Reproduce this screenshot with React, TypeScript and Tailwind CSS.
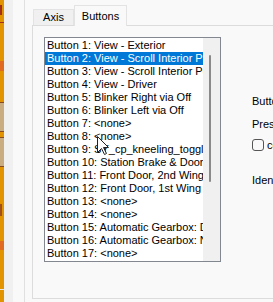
import React from 'react';

const items = [
  'Button 1: View - Exterior',
  'Button 2: View - Scroll Interior Position',
  'Button 3: View - Scroll Interior Position',
  'Button 4: View - Driver',
  'Button 5: Blinker Right via Off',
  'Button 6: Blinker Left via Off',
  'Button 7: <none>',
  'Button 8: <none>',
  'Button 9: SY_cp_kneeling_toggle',
  'Button 10: Station Brake & Door Release',
  'Button 11: Front Door, 2nd Wing',
  'Button 12: Front Door, 1st Wing',
  'Button 13: <none>',
  'Button 14: <none>',
  'Button 15: Automatic Gearbox: D',
  'Button 16: Automatic Gearbox: N',
  'Button 17: <none>',
];

const Cursor = () => (
  <svg className="absolute left-[97px] top-[136px]" width="13" height="20" viewBox="0 0 13 20">
    <path d="M0.5 0.5 L0.5 16.5 L4.5 12.5 L7.5 18.5 L9.5 17.5 L6.5 11.5 L11.5 11.5 Z" fill="#fff" stroke="#222" strokeWidth="1" />
  </svg>
);

const App: React.FC = () => {
  const selected = 1;

  return (
    <div className="relative flex w-[273px] h-[302px] overflow-hidden bg-[#f9f9f9] text-[11px] text-black" style={{ fontFamily: '"Liberation Sans", Arial, sans-serif' }}>
      {/* bit of the window behind */}
      <div className="flex flex-col w-[4px] bg-[#e29400]">
        <div className="h-[22px] relative">
          <div className="absolute left-0 top-[5px] w-[2px] h-[10px] bg-[#a0301a]" />
        </div>
        <div className="h-px bg-[#a0301a]" />
        <div className="h-[38px]" />
        <div className="h-[10px] bg-[#e06a20]" />
        <div className="h-[31px]" />
        <div className="h-px bg-[#8a4a20]" />
        <div className="h-[28px] bg-[#c9ad80]" />
        <div className="h-px bg-[#8a4a20]" />
        <div className="h-[5px]" />
        <div className="h-px bg-[#8a4a20]" />
        <div className="h-[28px] bg-[#c9ad80]" />
        <div className="h-px bg-[#8a4a20]" />
        <div className="h-[37px]" />
        <div className="h-[12px] w-[2px] bg-[#a0501a]" />
        <div className="h-[25px]" />
        <div className="h-[9px] bg-[#e06a20]" />
        <div className="h-[39px]" />
        <div className="h-px bg-[#e8e8e8]" />
        <div className="flex-1" />
      </div>
      <div className="w-[9px] bg-[#f0f0f0]" />
      <div className="w-[12px] border-r border-[#e0e0e0]" />
      <div className="w-[7px]" />

      {/* tab control */}
      <div className="flex flex-col flex-1 min-w-0">
        <div className="flex items-end h-[25px] pl-px">
          <div className="flex items-center justify-center w-[41px] h-[16px] border border-b-0 border-[#e3e3e3] bg-[#f0f0f0]">Axis</div>
          <div className="relative z-10 -mb-px flex items-center justify-center w-[53px] h-[21px] border border-b-0 border-[#e3e3e3] bg-[#f9f9f9]">Buttons</div>
        </div>
        <div className="flex h-[274px] border-l border-t border-b border-[#dcdcdc]">
          <div className="ml-[11px] mt-[11px] flex w-[177px] h-[225px] border border-[#828790] bg-white">
            <div className="flex-1 min-w-0 pt-px">
              {items.map((text, i) => (
                <div
                  key={i}
                  className={`h-[13px] leading-[13px] pl-[2px] whitespace-nowrap overflow-hidden ${i === selected ? 'bg-[#0078d7] text-white' : ''}`}
                >
                  {text}
                </div>
              ))}
            </div>
            <div className="w-[17px] bg-[#f0f0f0] pt-[17px] pl-[6px]">
              <div className="w-[2px] h-[127px] rounded-full bg-[#8a8a8a]" />
            </div>
          </div>
          <div className="ml-[31px] whitespace-nowrap">
            <div className="mt-[67px] h-[16px] leading-[16px]">Button name:</div>
            <div className="mt-[7px] h-[16px] leading-[16px]">Press action:</div>
            <div className="mt-[6px] flex items-center h-[14px]">
              <div className="w-[12px] h-[12px] rounded-[3px] border border-[#555] bg-[#f9f9f9]" />
              <span className="ml-[3px]">continuous</span>
            </div>
            <div className="mt-[20px] h-[16px] leading-[16px]">Identifier:</div>
          </div>
        </div>
      </div>

      <Cursor />
    </div>
  );
};

export default App;
